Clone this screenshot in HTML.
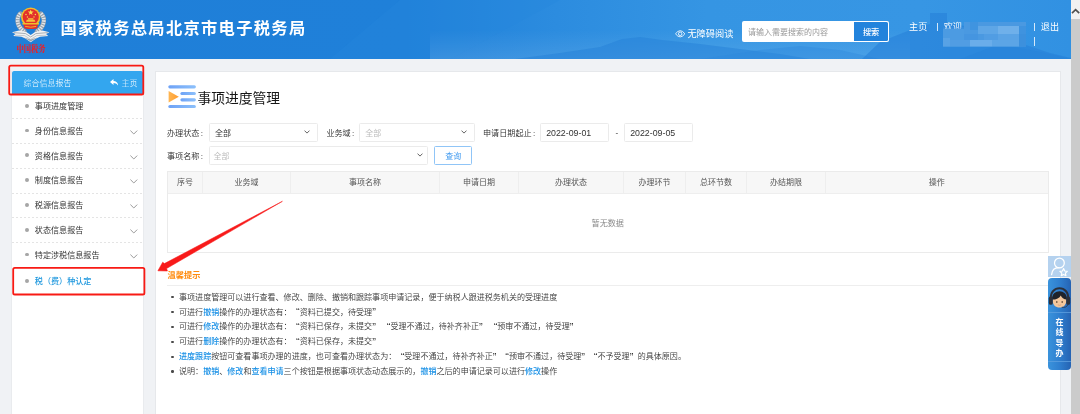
<!DOCTYPE html>
<html lang="zh-CN">
<head>
<meta charset="utf-8">
<title>国家税务总局北京市电子税务局</title>
<style>
*{box-sizing:border-box;margin:0;padding:0}
html,body{width:1080px;height:414px;overflow:hidden}
body{position:relative;will-change:transform;background:#f0f2f5;font-family:"Liberation Sans","Noto Sans CJK SC",sans-serif;font-size:8px;color:#333;line-height:1}
.abs{position:absolute;white-space:nowrap}
/* header */
#hdr{position:absolute;left:0;top:0;width:1071px;height:58.5px;background:#1f7fd8;overflow:hidden}
#hdr svg.bg{position:absolute;left:0;top:0}
#title{left:60.4px;top:17px;font-size:16.3px;font-weight:bold;color:#fff;letter-spacing:1.3px;line-height:22px}
.hw{color:#fff}
/* scrollbar */
#sb{position:absolute;left:1071px;top:0;width:9px;height:414px;background:#f1f1f1}
#sb .th{position:absolute;left:0;top:19px;width:9px;height:395px;background:#cbcbcb}
/* sidebar */
#side{position:absolute;left:12px;top:71px;width:131px;height:343px;background:#fff;box-shadow:-1px 0 0 #e9ebee,1px 0 0 #e9ebee}
#side .hd{position:absolute;left:0;top:0;width:131px;height:22.5px;background:#33a6ef;border-radius:2px 2px 0 0;color:#fff}
.it{position:absolute;left:0;width:131px;height:24.8px;color:#333;background:repeating-linear-gradient(90deg,#e4e4e4 0,#e4e4e4 2px,transparent 2px,transparent 4px) left bottom/100% 1px no-repeat}
.it .dot{position:absolute;left:13px;top:9.4px;width:3.8px;height:3.8px;border-radius:50%;background:#a6a6a6}
.it .tx{position:absolute;left:22.8px;top:.7px;line-height:24.8px;font-size:8.1px;white-space:nowrap}
.it svg{position:absolute;left:118.3px;top:10.6px}
.red{position:absolute;border:1.5px solid #f21d1d;border-radius:2.5px}
/* main */
#main{position:absolute;left:155px;top:71.3px;width:906px;height:343px;background:#fff;border:1px solid #e6e8eb;border-bottom:0}
.lbl{font-size:8.12px;color:#2c2c2c;line-height:18px;font-weight:350}
.sel{position:absolute;height:18.2px;border:1px solid #ebebeb;border-radius:1.5px;background:#fff;font-size:8px;line-height:19.6px;padding-left:5px;white-space:nowrap}
.sel.ph{color:#bcbcbc}
.sel svg{position:absolute;right:7px;top:5.4px}
#tbl{position:absolute;left:167px;top:171px;width:881.5px;height:82.2px;border:1px solid #ebebeb;background:#fff}
#tbl .th{position:absolute;left:0;top:0;width:100%;height:22.3px;background:#f7f7f7;border-bottom:1px solid #eeeeee}
#tbl .c{position:absolute;top:0;height:22.3px;line-height:22.3px;text-align:center;font-size:8px;color:#555;border-right:1px solid #eeeeee;white-space:nowrap}
.tip li{position:absolute;left:0;white-space:nowrap;list-style:none;font-size:8.06px;line-height:14.8px;color:#383838;font-weight:350}
.tip i{font-style:normal;color:#1890e6;font-weight:500}
.q{display:inline-block;width:8.06px;font-size:11px;line-height:8px;vertical-align:-1.6px}
.q.l{text-align:right}
.q.r{text-align:left}
.bdot{position:absolute;width:2.4px;height:2.4px;border-radius:50%;background:#4a4a4a}
</style>
</head>
<body>
<!-- HEADER -->
<div id="hdr">
  <svg class="bg" width="1071" height="59" viewBox="0 0 1071 59">
    <defs>
      <linearGradient id="hg" x1="0" y1="0" x2="1" y2="0">
        <stop offset="0" stop-color="#1f7fd8"/><stop offset=".38" stop-color="#1f80d9"/>
        <stop offset=".52" stop-color="#2c8cdf"/><stop offset=".66" stop-color="#3595e3"/>
        <stop offset=".86" stop-color="#3796e4"/><stop offset="1" stop-color="#3191e2"/>
      </linearGradient>
      <linearGradient id="mist" x1="0" y1="0" x2="0" y2="1">
        <stop offset="0" stop-color="#fff" stop-opacity="0"/><stop offset="1" stop-color="#fff" stop-opacity=".1"/>
      </linearGradient>
    </defs>
    <rect width="1071" height="59" fill="url(#hg)"/>
    <polygon points="400,0 560,0 450,59 330,59" fill="#2586dc" opacity=".35"/>
    <rect x="430" y="30" width="480" height="29" fill="url(#mist)"/>
    <polygon points="515,59 560,53 600,47 622,39 640,37 662,40 700,44 740,49 780,54 810,59" fill="#2480d8" opacity=".5"/>
    <polygon points="700,59 760,50 800,46 840,50 880,59" fill="#2c88dc" opacity=".4"/>
    <polygon points="862,59 880,42 900,34 918,27 930,24 930,13 947,13 947,23 960,25 990,33 1020,43 1050,53 1071,58 1071,59" fill="#2781d9" opacity=".6"/>
    <polygon points="960,59 1000,44 1040,52 1071,59" fill="#2580d8" opacity=".35"/>
  </svg>
  <svg class="abs" style="left:8px;top:2px" width="46" height="44" viewBox="8 2 46 44">
    <!-- wreath -->
    <g fill="none" stroke-linecap="round">
      <path d="M20.4 13.6 C16 17.6 16.4 26.4 24.4 31.4" stroke="#98a1ab" stroke-width="4.6"/>
      <path d="M41 13.6 C45.4 17.6 45 26.4 37 31.4" stroke="#98a1ab" stroke-width="4.6"/>
      <path d="M20.4 13.6 C16 17.6 16.4 26.4 24.4 31.4" stroke="#e4e8ec" stroke-width="3.6" stroke-dasharray="1.3 1.2" stroke-linecap="butt"/>
      <path d="M41 13.6 C45.4 17.6 45 26.4 37 31.4" stroke="#e4e8ec" stroke-width="3.6" stroke-dasharray="1.3 1.2" stroke-linecap="butt"/>
    </g>
    <!-- wings / ribbon -->
    <path d="M12 32.2 L19 30.4 L26.4 32 L30.7 35 L35 32 L42.4 30.4 L49.4 32.2 L46 34 L48.2 36 L40 36.8 L36 38.4 L30.7 42.2 L25.4 38.4 L21.4 36.8 L13.2 36 L15.4 34 Z" fill="#f0f2f4"/>
    <path d="M13.6 32.6 L25.6 33.6 L30.7 37 L35.8 33.6 L47.8 32.6" fill="none" stroke="#8a939c" stroke-width=".7"/>
    <path d="M15 35.2 L24.6 35.6 L30.7 39.4 L36.8 35.6 L46.4 35.2" fill="none" stroke="#a4acb4" stroke-width=".6"/>
    <path d="M24 37.6 L30.7 41.6 L37.4 37.6 L30.7 39.6 Z" fill="#9aa3ac"/>
    <!-- emblem -->
    <circle cx="30.7" cy="17.1" r="9.7" fill="#f0be2c"/>
    <circle cx="30.7" cy="17.1" r="8.1" fill="#e3302b"/>
    <path d="M23.2 23.6 L38.2 23.6 L37.2 28.2 Q30.7 30 24.2 28.2 Z" fill="#e3302b"/>
    <path d="M22.4 23 H39 V24.5 H22.4 Z" fill="#f0be2c"/>
    <path d="M26 21.8 H35.4 L34.6 19.8 H26.8 Z M28 19.4 H33.4 V18.2 H28 Z" fill="#f3c63a"/>
    <path d="M25.2 26.4 Q30.7 28 36.2 26.4" fill="none" stroke="#f0be2c" stroke-width=".9"/>
    <polygon points="30.7,9.4 31.5,11.6 33.7,11.6 31.9,13 32.6,15.1 30.7,13.8 28.8,15.1 29.5,13 27.7,11.6 29.9,11.6" fill="#f8dc50"/>
    <circle cx="26" cy="14.4" r=".75" fill="#f8dc50"/><circle cx="35.4" cy="14.4" r=".75" fill="#f8dc50"/>
    <circle cx="27.4" cy="17" r=".65" fill="#f8dc50"/><circle cx="34" cy="17" r=".65" fill="#f8dc50"/>
  </svg>
  <div class="abs" style="left:16.4px;top:43px;font-family:'Liberation Serif','Noto Serif CJK SC',serif;font-size:7.3px;font-weight:900;color:#e8222a;line-height:9px;transform:scaleY(1.22);transform-origin:0 0">中国税务</div>
  <svg class="abs" style="left:674.6px;top:30.2px" width="10.4" height="7.6" viewBox="0 0 10.4 7.6"><path d="M.5 3.8 Q5.2 -2.4 9.9 3.8 Q5.2 10 .5 3.8 Z" fill="none" stroke="#fff" stroke-width=".85"/><circle cx="5.2" cy="3.8" r="1.75" fill="none" stroke="#fff" stroke-width=".85"/></svg>
  <div class="abs hw" style="left:687.4px;top:27.9px;font-size:9.2px;line-height:12px">无障碍阅读</div>
  <div class="abs" style="left:741.7px;top:21.4px;width:146.9px;height:20.3px;background:#fff;border-radius:2px"></div>
  <div class="abs" style="left:854.2px;top:22px;width:33.8px;height:19.1px;background:#2283dc;border-radius:0 1.5px 1.5px 0"></div>
  <div class="abs" style="left:748px;top:22.8px;font-size:8px;line-height:20.3px;color:#999">请输入需要搜索的内容</div>
  <div class="abs hw" style="left:854.2px;top:23px;width:33.8px;text-align:center;font-size:8.2px;font-weight:500;line-height:20.3px">搜索</div>
  <div class="abs hw" style="left:909.1px;top:20.6px;font-size:9.1px;line-height:12px">主页</div>
  <div class="abs" style="left:936.6px;top:22.6px;width:1px;height:8.6px;background:rgba(255,255,255,.8)"></div>
  <div class="abs hw" style="left:943.7px;top:20.6px;font-size:9.1px;line-height:12px">欢迎</div>
  <div class="abs" style="left:1033.6px;top:22.6px;width:1px;height:8.6px;background:rgba(255,255,255,.8)"></div>
  <div class="abs" style="left:1034.2px;top:37px;width:1px;height:8.6px;background:rgba(255,255,255,.8)"></div>
  <div class="abs hw" style="left:1040.8px;top:20.6px;font-size:9.1px;line-height:12px">退出</div>
  <svg class="abs" style="left:943px;top:22px" width="83" height="25" viewBox="0 0 83 25">
    <rect x="0" y="6.8" width="21" height="17.7" fill="#4c9be2"/>
    <rect x="21" y="0" width="62" height="24.5" fill="#4a99e1"/>
    <rect x="0" y="5.2" width="21" height="1.6" fill="#4c9be2" opacity=".4"/>
    <rect x="27" y="0" width="8" height="8" fill="#3f94e0"/>
    <rect x="35" y="4" width="20" height="8" fill="#5ea6e6"/>
    <rect x="55" y="4" width="21" height="8" fill="#6fb0ea"/>
    <rect x="21" y="12" width="14" height="6" fill="#4595e0"/>
    <rect x="41" y="12" width="14" height="6" fill="#519de3"/>
    <rect x="55" y="12" width="21" height="6" fill="#5aa3e5"/>
    <rect x="0" y="16" width="7" height="8.5" fill="#58a2e5"/>
    <rect x="7" y="18" width="20" height="6.5" fill="#519de3"/>
    <rect x="27" y="18" width="22" height="6.5" fill="#6aadea"/>
    <rect x="49" y="18" width="27" height="6.5" fill="#5ca5e6"/>
    <rect x="76" y="4" width="7" height="8" fill="#3f93df"/>
    <rect x="76" y="12" width="7" height="12.5" fill="#3c90dd"/>
  </svg>
  <div class="abs" id="title">国家税务总局北京市电子税务局</div>
</div>
<div id="sb"><div class="th"></div>
  <svg style="position:absolute;left:0;top:7px" width="9" height="8" viewBox="0 0 9 8"><path d="M1 6.2 L4.6 2.6 L8.2 6.2" fill="none" stroke="#505050" stroke-width="1.7"/></svg>
</div>

<!-- SIDEBAR -->
<div id="side">
  <div class="hd">
    <div class="abs" style="left:11.6px;top:1.5px;line-height:22.5px;font-size:8px;font-weight:300">综合信息报告</div>
    <svg style="position:absolute;left:97.5px;top:7.5px" width="8.5" height="7.5" viewBox="0 0 17 15"><path d="M7 0 L0 6 L7 12 V8 C11 8 14 9.5 16.5 14 C16 8 13 4.5 7 4 Z" fill="#fff"/></svg>
    <div class="abs" style="left:109.6px;top:1.5px;line-height:22.5px;font-size:8px;font-weight:300">主页</div>
  </div>
  <div class="it" style="top:23.4px"><span class="dot"></span><span class="tx">事项进度管理</span></div>
  <div class="it" style="top:48.2px"><span class="dot"></span><span class="tx">身份信息报告</span><svg width="7.6" height="5" viewBox="0 0 7.6 5"><path d="M.4 .6 L3.8 4 L7.2 .6" fill="none" stroke="#999" stroke-width="1"/></svg></div>
  <div class="it" style="top:73.0px"><span class="dot"></span><span class="tx">资格信息报告</span><svg width="7.6" height="5" viewBox="0 0 7.6 5"><path d="M.4 .6 L3.8 4 L7.2 .6" fill="none" stroke="#999" stroke-width="1"/></svg></div>
  <div class="it" style="top:97.8px"><span class="dot"></span><span class="tx">制度信息报告</span><svg width="7.6" height="5" viewBox="0 0 7.6 5"><path d="M.4 .6 L3.8 4 L7.2 .6" fill="none" stroke="#999" stroke-width="1"/></svg></div>
  <div class="it" style="top:122.6px"><span class="dot"></span><span class="tx">税源信息报告</span><svg width="7.6" height="5" viewBox="0 0 7.6 5"><path d="M.4 .6 L3.8 4 L7.2 .6" fill="none" stroke="#999" stroke-width="1"/></svg></div>
  <div class="it" style="top:147.4px"><span class="dot"></span><span class="tx">状态信息报告</span><svg width="7.6" height="5" viewBox="0 0 7.6 5"><path d="M.4 .6 L3.8 4 L7.2 .6" fill="none" stroke="#999" stroke-width="1"/></svg></div>
  <div class="it" style="top:172.2px;background:none"><span class="dot"></span><span class="tx">特定涉税信息报告</span><svg width="7.6" height="5" viewBox="0 0 7.6 5"><path d="M.4 .6 L3.8 4 L7.2 .6" fill="none" stroke="#999" stroke-width="1"/></svg></div>
  <div class="it" style="top:198.4px;background:none"><span class="dot"></span><span class="tx" style="color:#1f98de;font-weight:500">税（费）种认定</span></div>
</div>
<svg class="abs" style="left:7px;top:63px" width="140" height="34" viewBox="7 63 140 34"><rect x="9.2" y="65.6" width="134.1" height="28.9" rx="1.6" fill="none" stroke="#f81a14" stroke-width="1.8"/></svg>
<svg class="abs" style="left:10px;top:265px" width="140" height="32" viewBox="10 265 140 32"><rect x="13.2" y="267.8" width="131.2" height="26.7" rx="1.6" fill="none" stroke="#f81a14" stroke-width="1.8"/></svg>

<!-- MAIN -->
<div id="main"></div>
<svg class="abs" style="left:168px;top:84.9px" width="29" height="24" viewBox="0 0 29 24">
  <defs><linearGradient id="ib" x1="0" y1="0" x2="1" y2="0"><stop offset="0" stop-color="#6ea2f6"/><stop offset="1" stop-color="#8cc0fb"/></linearGradient>
  <linearGradient id="it" x1="0" y1="0" x2="1" y2="0"><stop offset="0" stop-color="#ffb652"/><stop offset="1" stop-color="#ff9c2e"/></linearGradient></defs>
  <rect x=".3" y=".3" width="27.6" height="3.1" rx="1.55" fill="url(#ib)"/>
  <rect x="12.4" y="6.9" width="15.5" height="3.1" rx="1.55" fill="url(#ib)"/>
  <rect x="12.4" y="13.3" width="15.5" height="3.1" rx="1.55" fill="url(#ib)"/>
  <rect x=".3" y="19.9" width="27.6" height="3.1" rx="1.55" fill="url(#ib)"/>
  <polygon points=".6,6 10.8,11.7 .6,17.4" fill="url(#it)"/>
</svg>
<div class="abs" style="left:197.4px;top:88.7px;font-size:13.8px;line-height:20px;color:#161616">事项进度管理</div>

<div class="abs lbl" style="left:167px;top:125px">办理状态<span style="margin-left:1.3px">:</span></div>
<div class="sel" style="left:209px;top:123.4px;width:108.6px;color:#333">全部<svg width="6" height="4" viewBox="0 0 6 4"><path d="M.5 .6 L3 3.1 L5.5 .6" fill="none" stroke="#484848" stroke-width=".85"/></svg></div>
<div class="abs lbl" style="left:326.4px;top:125px">业务域<span style="margin-left:1.3px">:</span></div>
<div class="sel ph" style="left:359.3px;top:123.4px;width:115.3px">全部<svg width="6" height="4" viewBox="0 0 6 4"><path d="M.5 .6 L3 3.1 L5.5 .6" fill="none" stroke="#484848" stroke-width=".85"/></svg></div>
<div class="abs lbl" style="left:483px;top:125px">申请日期起止<span style="margin-left:1.3px">:</span></div>
<div class="sel" style="left:540.2px;top:123.4px;width:68.6px;font-size:8.8px;color:#333;line-height:19px">2022-09-01</div>
<div class="abs lbl" style="left:615.5px;top:123.5px">-</div>
<div class="sel" style="left:624.2px;top:123.4px;width:68.6px;font-size:8.8px;color:#333;line-height:19px">2022-09-05</div>

<div class="abs lbl" style="left:167px;top:148.2px">事项名称<span style="margin-left:1.3px">:</span></div>
<div class="sel ph" style="left:209px;top:146.4px;width:218.9px;padding-left:3.5px;line-height:19.8px">全部<svg style="right:3.6px" width="6" height="4" viewBox="0 0 6 4"><path d="M.5 .6 L3 3.1 L5.5 .6" fill="none" stroke="#484848" stroke-width=".85"/></svg></div>
<div class="sel" style="left:434.4px;top:146.4px;width:37.6px;border-color:#90c5f7;color:#409af0;text-align:center;padding:0;line-height:19.6px">查询</div>

<div id="tbl">
  <div class="th"></div>
  <div class="c" style="left:0px;width:35px">序号</div>
  <div class="c" style="left:35px;width:88px">业务域</div>
  <div class="c" style="left:123px;width:149px">事项名称</div>
  <div class="c" style="left:272px;width:79px">申请日期</div>
  <div class="c" style="left:351px;width:105px">办理状态</div>
  <div class="c" style="left:456px;width:62px">办理环节</div>
  <div class="c" style="left:518px;width:61px">总环节数</div>
  <div class="c" style="left:579px;width:79px">办结期限</div>
  <div class="c" style="left:658px;width:221.5px;border-right:0">操作</div>
  <div class="abs" style="left:0;width:100%;top:48.4px;text-align:center;font-size:8.1px;color:#8a8a8a">暂无数据</div>
</div>

<!-- arrow -->
<svg class="abs" style="left:150px;top:195px" width="140" height="80" viewBox="150 195 140 80">
  <polygon points="282.4,201.3 164.4,263.6 162.7,262.2 157.9,270.8 167.4,271 166.6,268.5" fill="#f81a1a" stroke="#f81a1a" stroke-width=".55" stroke-linejoin="round"/>
</svg>

<!-- tips -->
<div class="abs" style="left:167.6px;top:269.5px;font-size:8.2px;font-weight:bold;color:#ff8b0d;line-height:11px">温馨提示</div>
<div class="abs" style="left:167px;top:284.6px;width:881px;height:1px;background:#eeeeee"></div>
<ul class="tip abs" style="left:179px;top:289.8px">
  <li style="top:1px">事项进度管理可以进行查看、修改、删除、撤销和跟踪事项申请记录，便于纳税人跟进税务机关的受理进度</li>
  <li style="top:16px">可进行<i>撤销</i>操作的办理状态有：<span class="q l">“</span>资料已提交，待受理<span class="q r">”</span></li>
  <li style="top:30.6px">可进行<i>修改</i>操作的办理状态有：<span class="q l">“</span>资料已保存，未提交<span class="q r">”</span> <span class="q l">“</span>受理不通过，待补齐补正<span class="q r">”</span> <span class="q l">“</span>预审不通过，待受理<span class="q r">”</span></li>
  <li style="top:45.5px">可进行<i>删除</i>操作的办理状态有：<span class="q l">“</span>资料已保存，未提交<span class="q r">”</span></li>
  <li style="top:60.4px"><i>进度跟踪</i>按钮可查看事项办理的进度，也可查看办理状态为：<span class="q l">“</span>受理不通过，待补齐补正<span class="q r">”</span><span class="q l">“</span>预审不通过，待受理<span class="q r">”</span><span class="q l">“</span>不予受理<span class="q r">”</span>的具体原因。</li>
  <li style="top:75.3px">说明：<i>撤销</i>、<i>修改</i>和<i>查看申请</i>三个按钮是根据事项状态动态展示的，<i>撤销</i>之后的申请记录可以进行<i>修改</i>操作</li>
</ul>
<div class="bdot" style="left:171.4px;top:296.1px"></div>
<div class="bdot" style="left:171.4px;top:311.1px"></div>
<div class="bdot" style="left:171.4px;top:325.7px"></div>
<div class="bdot" style="left:171.4px;top:340.6px"></div>
<div class="bdot" style="left:171.4px;top:355.5px"></div>
<div class="bdot" style="left:171.4px;top:370.4px"></div>

<!-- floating widgets -->
<div class="abs" style="left:1048px;top:256.4px;width:23px;height:20.8px;background:#b5d2ef"></div>
<svg class="abs" style="left:1048px;top:256.4px" width="23" height="21" viewBox="0 0 23 21">
  <circle cx="11.4" cy="7" r="4.9" fill="none" stroke="#fff" stroke-width="1.25"/>
  <path d="M3.6 18.6 C4.2 13.6 7.4 11.6 11 11.7" fill="none" stroke="#fff" stroke-width="1.25" stroke-linecap="round"/>
  <path d="M15.6 12.6 L16.7 15 L19.3 15.3 L17.4 17.1 L17.9 19.7 L15.6 18.4 L13.3 19.7 L13.8 17.1 L11.9 15.3 L14.5 15 Z" fill="#b5d2ef" stroke="#fff" stroke-width="1.2" stroke-linejoin="round"/>
</svg>
<div class="abs" style="left:1048px;top:278px;width:23px;height:91.6px;border-radius:4px 4px 4px 4px;background:linear-gradient(90deg,#3a93dc 0,#2f7fcf 50%,#2563b3 100%)"></div>
<div class="abs" style="left:1048px;top:312px;width:23px;height:.8px;background:#5c9fde;opacity:.8"></div>
<div class="abs" style="left:1048px;top:361px;width:23px;height:1px;background:#5c9fde;opacity:.8"></div>
<svg class="abs" style="left:1048px;top:286px" width="23" height="24" viewBox="0 0 23 24">
  <path d="M2.8 13.4 C1.6 -1.6 21.4 -1.6 20.2 13.4" fill="none" stroke="#2b303b" stroke-width="2"/>
  <path d="M4.6 14 C4.2 4 18.8 4 18.4 14 C18.4 19 15.4 21.6 11.5 21.6 C7.6 21.6 4.6 19 4.6 14 Z" fill="#f4c79c"/>
  <path d="M4 13.6 C3.4 2.4 19.6 2.4 19 13.6 C15.6 13.2 13.6 11.4 12.8 9.4 C11.6 11.8 8.4 13.6 4 13.6 Z" fill="#1f232b"/>
  <rect x=".8" y="10.6" width="4" height="8.2" rx="1.9" fill="#2b303b"/>
  <rect x="18.2" y="10.6" width="4" height="8.2" rx="1.9" fill="#2b303b"/>
  <circle cx="8.8" cy="16" r=".8" fill="#3a2a20"/><circle cx="14.2" cy="16" r=".8" fill="#3a2a20"/>
  <path d="M9.8 18.8 Q11.5 19.8 13.2 18.8" fill="none" stroke="#c9805a" stroke-width=".5"/>
  <path d="M20.2 18 C19.4 21 16.2 22 13.8 21.2" fill="none" stroke="#2b303b" stroke-width=".7"/>
</svg>
<div class="abs hw" style="left:1048px;top:318.4px;width:23px;text-align:center;font-size:8px;font-weight:bold;line-height:10.1px">在<br>线<br>导<br>办</div>

</body>
</html>
